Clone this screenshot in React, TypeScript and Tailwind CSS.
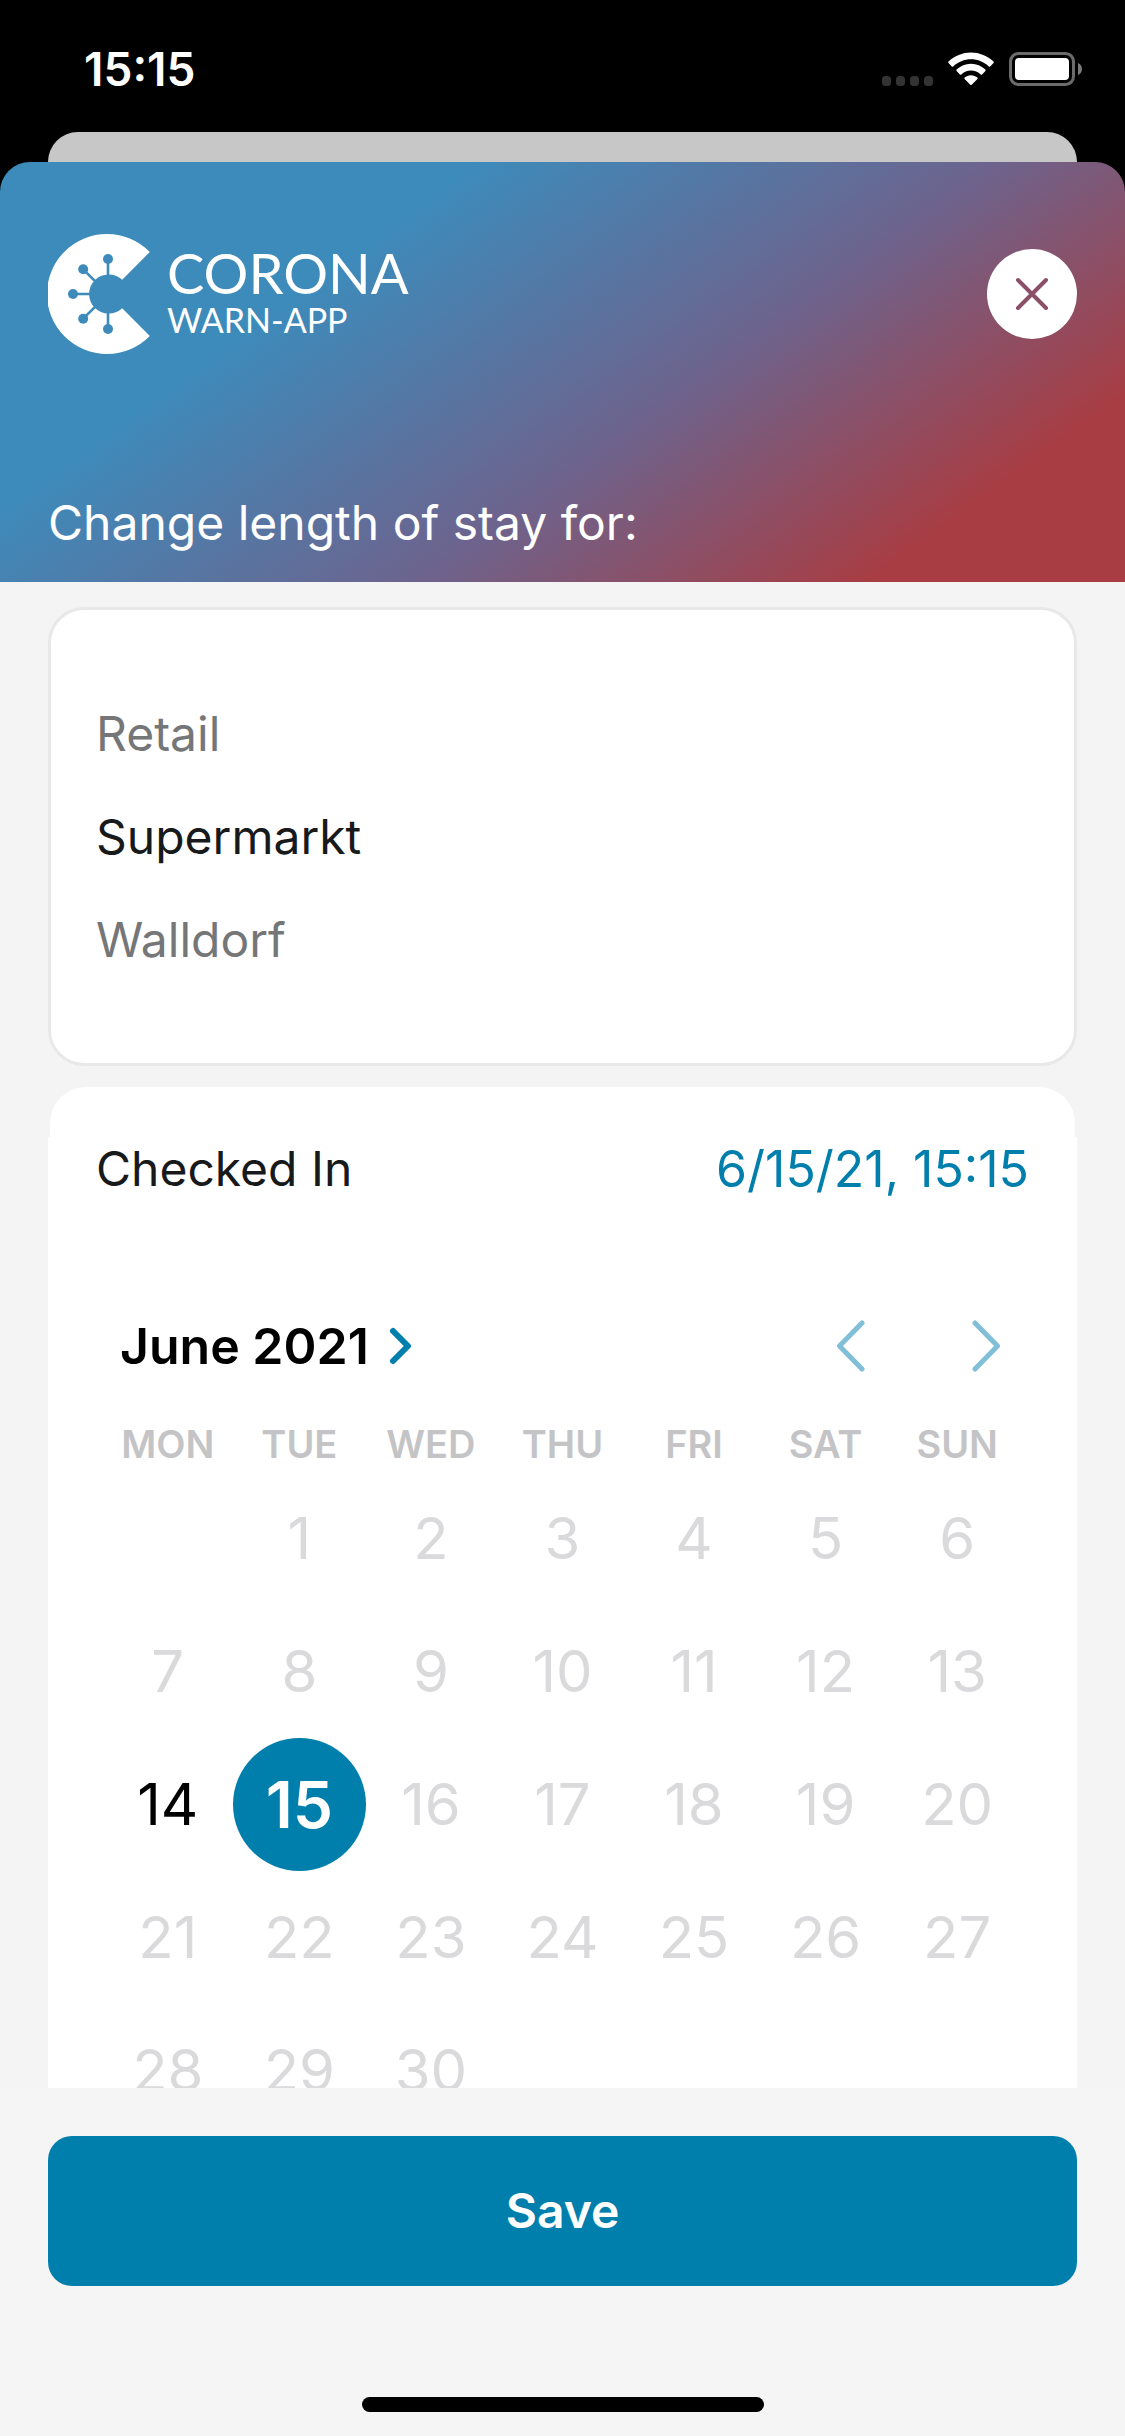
import React from "react";

const WEEKDAYS = ["MON", "TUE", "WED", "THU", "FRI", "SAT", "SUN"];

const WEEKS: (number | null)[][] = [
  [null, 1, 2, 3, 4, 5, 6],
  [7, 8, 9, 10, 11, 12, 13],
  [14, 15, 16, 17, 18, 19, 20],
  [21, 22, 23, 24, 25, 26, 27],
  [28, 29, 30, null, null, null, null],
];

const SELECTED = 15;
const AVAILABLE = [14, 15];

function WifiIcon() {
  return (
    <svg width="46" height="34" viewBox="0 0 46 34" fill="#fff" aria-hidden="true">
      <path d="M23 0.5C31.6 0.5 39.6 3.9 45.5 9.6c.4.4.4 1 0 1.4l-3.3 3.4c-.4.4-1 .4-1.4 0C36.1 9.900 29.8 7.200 23 7.200S9.900 9.900 5.200 14.400c-.4.4-1 .4-1.4 0L.5 11c-.4-.4-.4-1 0-1.400C6.400 3.900 14.400.5 23 .5Z" />
      <path d="M23 11.800c5.500 0 10.600 2.200 14.400 5.800.4.4.4 1 0 1.400l-3.300 3.400c-.4.4-1 .4-1.400 0-2.600-2.400-6-3.800-9.700-3.800s-7.100 1.400-9.700 3.800c-.4.4-1 .4-1.400 0L8.600 19c-.4-.4-.4-1 0-1.400 3.800-3.600 8.900-5.800 14.400-5.800Z" />
      <path d="M23 23.200c2.500 0 4.700.9 6.400 2.400.4.4.4 1 0 1.400l-5.700 5.800c-.4.4-1 .4-1.400 0L16.600 27c-.4-.4-.4-1 0-1.400 1.700-1.500 3.900-2.400 6.400-2.400Z" />
    </svg>
  );
}

function BatteryIcon() {
  return (
    <svg width="74" height="34" viewBox="0 0 74 34" aria-hidden="true">
      <rect x="1.500" y="1.500" width="63" height="31" rx="8" fill="none" stroke="#6b6b6b" strokeWidth="3" />
      <rect x="6" y="6" width="54" height="22" rx="4" fill="#fff" />
      <path d="M69 11c2.500 1 4 3.300 4 6s-1.500 5-4 6Z" fill="#7a7a7a" />
    </svg>
  );
}

function StatusBar() {
  return (
    <div className="flex h-[132px] shrink-0 items-start justify-between bg-black pt-[42px] pr-[42px] pl-[84px] text-white">
      <time className="text-[46px] leading-[54px] font-semibold">15:15</time>
      <div className="flex items-center gap-[15px] pt-[10px]">
        <svg width="51" height="34" viewBox="0 0 51 34" fill="#333" aria-hidden="true">
          <rect x="0" y="24" width="9" height="10" rx="3.500" />
          <rect x="14" y="24" width="9" height="10" rx="3.500" />
          <rect x="28" y="24" width="9" height="10" rx="3.500" />
          <rect x="42" y="24" width="9" height="10" rx="3.500" />
        </svg>
        <WifiIcon />
        <BatteryIcon />
      </div>
    </div>
  );
}

function LogoMark() {
  return (
    <svg width="104" height="120" viewBox="0 0 104 120" aria-hidden="true">
      <defs>
        <mask id="virus">
          <rect width="104" height="120" fill="#fff" />
          <g stroke="#000" strokeWidth="2.600">
            <path d="M60 60V25M60 60V95M60 60H25M60 60 35.200 35.300M60 60 35.200 84.700" />
          </g>
          <circle cx="60" cy="25" r="5" />
          <circle cx="60" cy="95" r="5" />
          <circle cx="25" cy="60" r="5" />
          <circle cx="35.200" cy="35.300" r="5" />
          <circle cx="35.200" cy="84.700" r="5" />
        </mask>
      </defs>
      <path
        d="M101.800 18A60 60 0 1 0 101.800 102L74.200 74.200A19.600 19.600 0 1 1 74.200 45.800Z"
        fill="#fff"
        mask="url(#virus)"
      />
    </svg>
  );
}

function Header() {
  return (
    <header className="flex h-[420px] shrink-0 flex-col justify-between rounded-t-[30px] bg-[linear-gradient(144deg,#3d8bbb_28%,#6c648e_58%,#a83d43_85%)] px-[48px] pt-[72px] pb-[26px] text-white">
      <div className="flex items-center justify-between">
        <div className="flex items-center gap-[15px]">
          <LogoMark />
          <div className="flex flex-col font-['Lato',sans-serif]">
            <span className="text-[56px] leading-[52px]">CORONA</span>
            <span className="text-[34px] leading-[42px]">WARN-APP</span>
          </div>
        </div>
        <button
          type="button"
          aria-label="Close"
          className="flex size-[90px] items-center justify-center rounded-full bg-white"
        >
          <svg width="34" height="34" viewBox="0 0 34 34" aria-hidden="true">
            <path d="M3 3 31 31M31 3 3 31" stroke="#8b5068" strokeWidth="4" strokeLinecap="round" />
          </svg>
        </button>
      </div>
      <h1 className="text-[48px] leading-[66px]">Change length of stay for:</h1>
    </header>
  );
}

function PlaceCard() {
  return (
    <section className="rounded-[36px] border-3 border-[#e8e8e8] bg-white px-[45px] py-[72px] text-[48px] leading-[103px]">
      <p className="text-[#757677]">Retail</p>
      <p className="text-[#17191a]">Supermarkt</p>
      <p className="text-[#757677]">Walldorf</p>
    </section>
  );
}

function Day({ day }: { day: number }) {
  if (day === SELECTED) {
    return (
      <button
        type="button"
        aria-pressed="true"
        className="size-[133px] shrink-0 rounded-full bg-[#007fad] text-[64px] font-semibold text-white"
      >
        {day}
      </button>
    );
  }
  return (
    <button
      type="button"
      disabled={!AVAILABLE.includes(day)}
      className="size-[133px] shrink-0 rounded-full text-[58px] text-black disabled:text-[#dadadc]"
    >
      {day}
    </button>
  );
}

function Calendar() {
  return (
    <div className="bg-white px-[54px] pt-[164px] pb-[60px]">
      <div className="flex h-[90px] items-center justify-between pr-[22px] pl-[18px]">
        <button type="button" className="flex items-center gap-[21px] text-[50px] font-semibold text-black">
          June 2021
          <svg width="22" height="38" viewBox="0 0 22 38" fill="none" aria-hidden="true">
            <path d="M3 4 18 19 3 34" stroke="#007fad" strokeWidth="6" strokeLinecap="round" strokeLinejoin="round" />
          </svg>
        </button>
        <div className="flex items-center gap-[105px]">
          <button type="button" aria-label="Previous month">
            <svg width="30" height="52" viewBox="0 0 30 52" fill="none" aria-hidden="true">
              <path d="M26 3 3.500 26 26 49" stroke="#80bfd7" strokeWidth="5" strokeLinecap="round" strokeLinejoin="round" />
            </svg>
          </button>
          <button type="button" aria-label="Next month">
            <svg width="30" height="52" viewBox="0 0 30 52" fill="none" aria-hidden="true">
              <path d="M4 3 26.500 26 4 49" stroke="#80bfd7" strokeWidth="5" strokeLinecap="round" strokeLinejoin="round" />
            </svg>
          </button>
        </div>
      </div>
      <table className="mt-[29px] w-full table-fixed">
        <thead>
          <tr>
            {WEEKDAYS.map((name) => (
              <th key={name} scope="col" className="p-0 pb-[4px] text-[38px] leading-[48px] font-semibold text-[#c4c4c6]">
                {name}
              </th>
            ))}
          </tr>
        </thead>
        <tbody>
          {WEEKS.map((week, row) => (
            <tr key={row}>
              {week.map((day, col) => (
                <td key={col} className="p-0">
                  {day !== null && (
                    <div className="flex justify-center">
                      <Day day={day} />
                    </div>
                  )}
                </td>
              ))}
            </tr>
          ))}
        </tbody>
      </table>
    </div>
  );
}

export default function App() {
  return (
    <div className="flex h-screen flex-col bg-black font-['Inter',sans-serif]">
      <StatusBar />
      <div className="mx-[48px] h-[30px] shrink-0 rounded-t-[30px] bg-[#c7c7c7]" />
      <main className="flex min-h-0 flex-1 flex-col rounded-t-[30px]">
        <Header />
        <div className="min-h-0 flex-1 overflow-y-auto bg-[#f4f4f4] px-[48px] pt-[25px] [scrollbar-width:none]">
          <PlaceCard />
          <section className="mt-[21px]">
            <div className="mx-[2px] flex h-[50px] items-start justify-between rounded-t-[36px] bg-white px-[46px] pt-[40px] leading-[84px]">
              <h2 className="text-[48px] text-[#17191a]">Checked In</h2>
              <button type="button" className="text-[50px] text-[#007fad]">6/15/21, 15:15</button>
            </div>
            <Calendar />
          </section>
        </div>
        <footer className="flex shrink-0 flex-col bg-[#f5f5f5] px-[48px] pt-[48px] pb-[24px]">
          <button type="button" className="h-[150px] rounded-[24px] bg-[#007fad] text-[48px] font-semibold text-white">
            Save
          </button>
          <div className="mt-[111px] h-[15px] w-[402px] self-center rounded-full bg-black" />
        </footer>
      </main>
    </div>
  );
}
